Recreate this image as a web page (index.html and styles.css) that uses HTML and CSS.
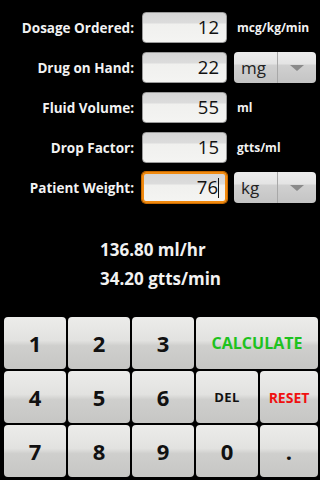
FILE: index.html
```html
<!DOCTYPE html>
<html>
<head>
<meta charset="utf-8">
<link rel="stylesheet" href="styles.css">
</head>
<body>
<div class="app">
  <div class="form">
    <div class="label">Dosage Ordered:</div>
    <div class="field"><span class="val">12</span></div>
    <div class="unit">mcg/kg/min</div>

    <div class="label">Drug on Hand:</div>
    <div class="field"><span class="val">22</span></div>
    <div class="spinner"><span class="sp-text">mg</span><span class="sp-arrow"><span class="tri"></span></span></div>

    <div class="label">Fluid Volume:</div>
    <div class="field"><span class="val">55</span></div>
    <div class="unit">ml</div>

    <div class="label">Drop Factor:</div>
    <div class="field"><span class="val">15</span></div>
    <div class="unit">gtts/ml</div>

    <div class="label">Patient Weight:</div>
    <div class="field focus"><span class="val">76<span class="caret"></span></span></div>
    <div class="spinner"><span class="sp-text">kg</span><span class="sp-arrow"><span class="tri"></span></span></div>
  </div>

  <div class="results">
    <div class="res">136.80 ml/hr</div>
    <div class="res">34.20 gtts/min</div>
  </div>

  <div class="keypad">
    <div class="key">1</div>
    <div class="key">2</div>
    <div class="key">3</div>
    <div class="key wide calc">CALCULATE</div>
    <div class="key">4</div>
    <div class="key">5</div>
    <div class="key">6</div>
    <div class="key small">DEL</div>
    <div class="key reset">RESET</div>
    <div class="key">7</div>
    <div class="key">8</div>
    <div class="key">9</div>
    <div class="key">0</div>
    <div class="key">.</div>
  </div>
</div>
</body>
</html>
```
FILE: styles.css
```css
html, body {
  margin: 0;
  padding: 0;
  background: #000;
}
body {
  width: 320px;
  height: 480px;
  overflow: hidden;
  font-family: "Open Sans", "DejaVu Sans", sans-serif;
}
.app {
  display: flex;
  flex-direction: column;
}
.form {
  display: grid;
  grid-template-columns: 134px 85px 82px;
  column-gap: 7px;
  row-gap: 9px;
  padding: 12px 0 0 1px;
  align-items: center;
}
.label {
  color: #f2f2f2;
  font-weight: bold;
  font-size: 13.5px;
  text-align: right;
  padding-right: 1px;
}
.field {
  height: 31px;
  box-sizing: border-box;
  border: 1px solid #9a9a9a;
  border-radius: 4px;
  background: linear-gradient(#d6d6d6 0, #dcdcdc 10px, #f0f0ee 11px, #f4f4f2 100%);
  display: flex;
  align-items: center;
  justify-content: flex-end;
  padding-right: 7px;
}
.field.focus {
  border: 2px solid #f08a10;
  box-shadow: 0 0 0 1px #c86a00;
  padding-right: 6px;
}
.val {
  font-size: 18.5px;
  color: #111;
  line-height: 1;
  display: flex;
  align-items: center;
}
.caret {
  display: inline-block;
  width: 1px;
  height: 20px;
  background: #111;
}
.unit {
  color: #f2f2f2;
  font-weight: bold;
  font-size: 12px;
  padding-left: 3px;
}
.spinner {
  height: 31px;
  box-sizing: border-box;
  border-radius: 4px;
  background: linear-gradient(#ececec 0, #e4e4e4 12px, #d0d0d0 13px, #c4c4c4 100%);
  display: flex;
  align-items: stretch;
}
.sp-text {
  width: 44px;
  border-right: 1px solid #a8a8a8;
  font-size: 17px;
  color: #222;
  padding-left: 7px;
  display: flex;
  align-items: center;
  box-sizing: border-box;
}
.sp-arrow {
  flex: 1;
  display: flex;
  align-items: center;
  justify-content: center;
}
.tri {
  width: 0;
  height: 0;
  border-left: 7px solid transparent;
  border-right: 7px solid transparent;
  border-top: 6px solid #8a8a8a;
}
.results {
  padding: 35px 0 0 100px;
  display: flex;
  flex-direction: column;
  gap: 6px;
}
.res {
  color: #f2f2f2;
  font-weight: bold;
  font-size: 17px;
  line-height: 23px;
}
.keypad {
  margin-top: 27px;
  padding: 0 2px 0 4px;
  display: grid;
  grid-template-columns: repeat(4, 62px) 58px;
  grid-auto-rows: 52px;
  column-gap: 2px;
  row-gap: 2px;
}
.key {
  border-radius: 4px;
  background: linear-gradient(#ececea 0%, #e2e2e0 45%, #cfcfcd 55%, #c6c6c4 100%);
  display: flex;
  align-items: center;
  justify-content: center;
  font-weight: bold;
  font-size: 22px;
  color: #111;
}
.key.wide {
  grid-column: span 2;
}
.calc {
  color: #1ec21e;
  font-size: 16px;
}
.small {
  font-size: 13px;
  letter-spacing: 0.5px;
}
.reset {
  color: #f01010;
  font-size: 14px;
}
```
